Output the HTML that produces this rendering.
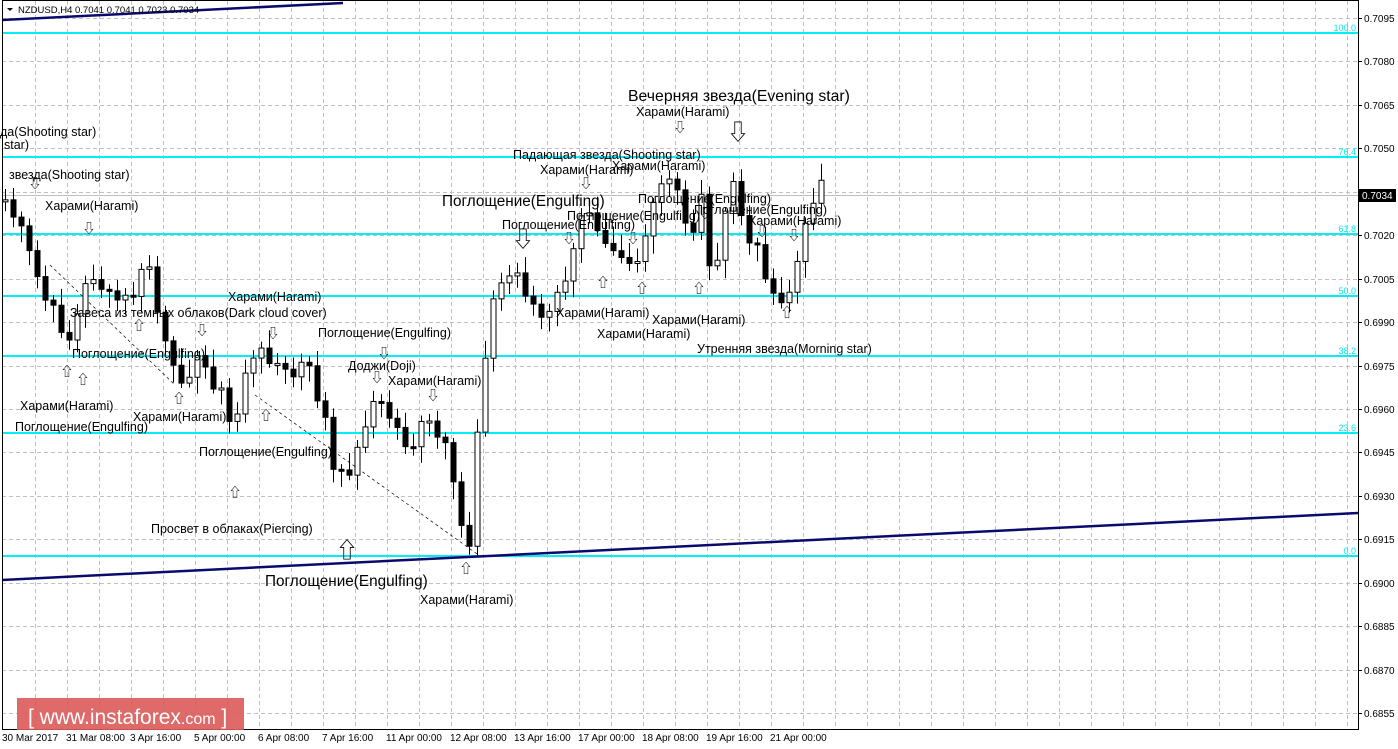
<!DOCTYPE html>
<html><head><meta charset="utf-8"><style>
body{margin:0;background:#fff;width:1398px;height:749px;overflow:hidden;font-family:"Liberation Sans","Noto Sans CJK SC",sans-serif}
svg{display:block}
.t{font-size:12.5px;fill:#000}
.b{font-size:15.3px;fill:#000}
.a{font-size:13px;fill:#000}
.f{font-size:9px;fill:#00e8f0}
.p{font-size:10px;fill:#000}
</style></head><body>
<svg id="s" width="1398" height="749" xmlns="http://www.w3.org/2000/svg">
<rect width="1398" height="749" fill="#fff"/>
<g id="grid" stroke="#c0c0c0" stroke-dasharray="4,3" stroke-width="1"></g>
<line x1="2" y1="195.5" x2="1358" y2="195.5" stroke="#c0c0c0"/>
<g stroke="#00eef5" stroke-width="2">
<line x1="2" y1="33" x2="1358" y2="33"/><line x1="2" y1="157" x2="1358" y2="157"/>
<line x1="2" y1="234" x2="1358" y2="234"/><line x1="2" y1="296" x2="1358" y2="296"/>
<line x1="2" y1="356" x2="1358" y2="356"/><line x1="2" y1="433" x2="1358" y2="433"/>
<line x1="2" y1="556" x2="1358" y2="556"/></g>
<g text-anchor="end">
<text class="f" x="1356" y="31">100.0</text><text class="f" x="1356" y="155">76.4</text>
<text class="f" x="1356" y="232">61.8</text><text class="f" x="1356" y="294">50.0</text>
<text class="f" x="1356" y="354">38.2</text><text class="f" x="1356" y="431">23.6</text>
<text class="f" x="1356" y="554">0.0</text></g>
<g stroke="#000" stroke-dasharray="3,3" stroke-width="0.7"><line x1="50" y1="265" x2="175" y2="385"/><line x1="255" y1="395" x2="480" y2="556"/></g>
<g stroke="#0a0a6e" stroke-width="2.5"><line x1="2" y1="20" x2="343" y2="3"/><line x1="2" y1="580" x2="1358" y2="513"/></g>
<g id="c"></g>
<text class="t" x="0" y="136">да(Shooting star)</text>
<text class="t" x="4" y="149">star)</text>
<text class="t" x="9" y="179">звезда(Shooting star)</text>
<text class="t" x="45" y="210">Харами(Harami)</text>
<text class="t" x="228" y="301">Харами(Harami)</text>
<text class="t" x="70" y="317">Завеса из темных облаков(Dark cloud cover)</text>
<text class="t" x="318" y="337">Поглощение(Engulfing)</text>
<text class="t" x="72" y="358">Поглощение(Engulfing)</text>
<text class="t" x="348" y="370">Доджи(Doji)</text>
<text class="t" x="388" y="385">Харами(Harami)</text>
<text class="t" x="20" y="410">Харами(Harami)</text>
<text class="t" x="133" y="421">Харами(Harami)</text>
<text class="t" x="15" y="431">Поглощение(Engulfing)</text>
<text class="t" x="199" y="456">Поглощение(Engulfing)</text>
<text class="t" x="151" y="533">Просвет в облаках(Piercing)</text>
<text class="b" x="265" y="586">Поглощение(Engulfing)</text>
<text class="t" x="420" y="604">Харами(Harami)</text>
<text class="b" x="628" y="101" style="font-size:15.8px">Вечерняя звезда(Evening star)</text>
<text class="t" x="636" y="116">Харами(Harami)</text>
<text class="t" x="513" y="159">Падающая звезда(Shooting star)</text>
<text class="t" x="612" y="170">Харами(Harami)</text>
<text class="t" x="540" y="174">Харами(Harami)</text>
<text class="b" x="442" y="206">Поглощение(Engulfing)</text>
<text class="t" x="638" y="203">Поглощение(Engulfing)</text>
<text class="t" x="694" y="214">Поглощение(Engulfing)</text>
<text class="t" x="567" y="220">Поглощение(Engulfing)</text>
<text class="t" x="748" y="225">Харами(Harami)</text>
<text class="t" x="502" y="229">Поглощение(Engulfing)</text>
<text class="t" x="556" y="317">Харами(Harami)</text>
<text class="t" x="652" y="324">Харами(Harami)</text>
<text class="t" x="597" y="338">Харами(Harami)</text>
<text class="t" x="697" y="353">Утренняя звезда(Morning star)</text>
<g class="a" text-anchor="middle">
<text x="35" y="188">⇩</text><text x="89" y="233">⇩</text><text x="202" y="335">⇩</text><text x="273" y="338">⇩</text>
<text x="384" y="358">⇩</text><text x="377" y="382">⇩</text><text x="433" y="400">⇩</text><text x="586" y="188">⇩</text>
<text x="680" y="132">⇩</text><text x="569" y="243">⇩</text><text x="633" y="243">⇩</text><text x="762" y="236">⇩</text>
<text x="794" y="240">⇩</text><text x="705" y="218">⇩</text>
<text x="67" y="376">⇧</text><text x="83" y="384">⇧</text><text x="139" y="330">⇧</text><text x="179" y="403">⇧</text>
<text x="266" y="420">⇧</text><text x="235" y="497">⇧</text><text x="466" y="573">⇧</text><text x="603" y="287">⇧</text>
<text x="642" y="293">⇧</text><text x="699" y="293">⇧</text><text x="787" y="317">⇧</text>
</g>
<text x="523" y="247" font-size="22" text-anchor="middle">⇩</text>
<text x="738" y="140" font-size="22" text-anchor="middle">⇩</text>
<text x="347" y="558" font-size="22" text-anchor="middle">⇧</text>
<rect x="1358" y="0" width="40" height="749" fill="#fff"/>
<line x1="1358.5" y1="0" x2="1358.5" y2="729" stroke="#000"/>
<line x1="2.5" y1="0" x2="2.5" y2="729" stroke="#000"/>
<line x1="2" y1="729.5" x2="1359" y2="729.5" stroke="#000"/>
<line x1="2" y1="0.5" x2="1359" y2="0.5" stroke="#000"/>
<g id="ax" class="p"></g>
<rect x="1359" y="189" width="37" height="13" fill="#000"/>
<text x="1362" y="199" class="p" style="fill:#fff">0.7034</text>
<g class="p">
<text x="2" y="741">30 Mar 2017</text><text x="66" y="741">31 Mar 08:00</text><text x="130" y="741">3 Apr 16:00</text>
<text x="194" y="741">5 Apr 00:00</text><text x="258" y="741">6 Apr 08:00</text><text x="322" y="741">7 Apr 16:00</text>
<text x="386" y="741">11 Apr 00:00</text><text x="450" y="741">12 Apr 08:00</text><text x="514" y="741">13 Apr 16:00</text>
<text x="578" y="741">17 Apr 00:00</text><text x="642" y="741">18 Apr 08:00</text><text x="706" y="741">19 Apr 16:00</text>
<text x="770" y="741">21 Apr 00:00</text></g>
<path d="M7 8 L13 8 L10 11 Z" fill="#000"/>
<text x="18" y="13" font-size="9.5" fill="#000">NZDUSD,H4  0.7041 0.7041 0.7023 0.7034</text>
<rect x="17" y="698" width="227" height="32" fill="#dc5a5a" opacity="0.9"/>
<text x="28" y="724" font-size="21" fill="#fff">[ www.instaforex<tspan font-size="16">.com</tspan> ]</text>
</svg>
<script>
(function(){
var ns="http://www.w3.org/2000/svg",g=document.getElementById('grid'),ax=document.getElementById('ax'),c=document.getElementById('c');
function el(p,t,a){var e=document.createElementNS(ns,t);for(var k in a)e.setAttribute(k,a[k]);p.appendChild(e);return e;}
for(var x=35;x<1358;x+=32)el(g,'line',{x1:x+.5,y1:1,x2:x+.5,y2:729});
for(var i=0;i<17;i++){var y=18+i*43.44;el(g,'line',{x1:2,y1:Math.round(y)+.5,x2:1358,y2:Math.round(y)+.5});
el(ax,'line',{x1:1358,y1:Math.round(y)+.5,x2:1362,y2:Math.round(y)+.5,stroke:'#000'});
var t=el(ax,'text',{x:1364,y:Math.round(y)+4});t.textContent=(0.7095-i*0.0015).toFixed(4);}
var k=[[5,200],[20,230],[45,300],[70,340],[90,270],[110,300],[130,300],[148,260],[160,330],[175,380],[200,360],[225,400],[232,440],[245,370],[265,350],[290,380],[305,360],[325,420],[335,485],[355,460],[370,400],[385,410],[410,450],[425,420],[445,450],[460,525],[470,545],[480,380],[495,290],[515,270],[530,300],[545,325],[560,290],[575,250],[585,200],[600,230],[620,250],[635,265],[650,220],[665,175],[680,200],[690,250],[700,180],[710,280],[725,220],[735,175],[745,240],[760,255],[775,300],[790,290],[805,230],[820,170],[828,195]];
function f(x){for(var i=0;i<k.length-1;i++)if(x<=k[i+1][0]){var a=k[i],b=k[i+1];return a[1]+(b[1]-a[1])*(x-a[0])/(b[0]-a[0]);}return 195;}
var s=7,prev=f(5);
for(var x=5;x<=828;x+=8){s=(s*9301+49297)%233280;var r=s/233280;var cl=f(x)+(r-0.5)*18,op=prev;
var hi=Math.min(op,cl)-4-r*14,lo=Math.max(op,cl)+4+(1-r)*14;
el(c,'line',{x1:x+.5,y1:hi,x2:x+.5,y2:lo,stroke:'#000'});
var by=Math.min(op,cl),h=Math.max(2,Math.abs(op-cl));
el(c,'rect',{x:x-2,y:by,width:5,height:h,fill:cl<op?'#fff':'#000',stroke:'#000'});prev=cl;}
})();
</script>
</body></html>
